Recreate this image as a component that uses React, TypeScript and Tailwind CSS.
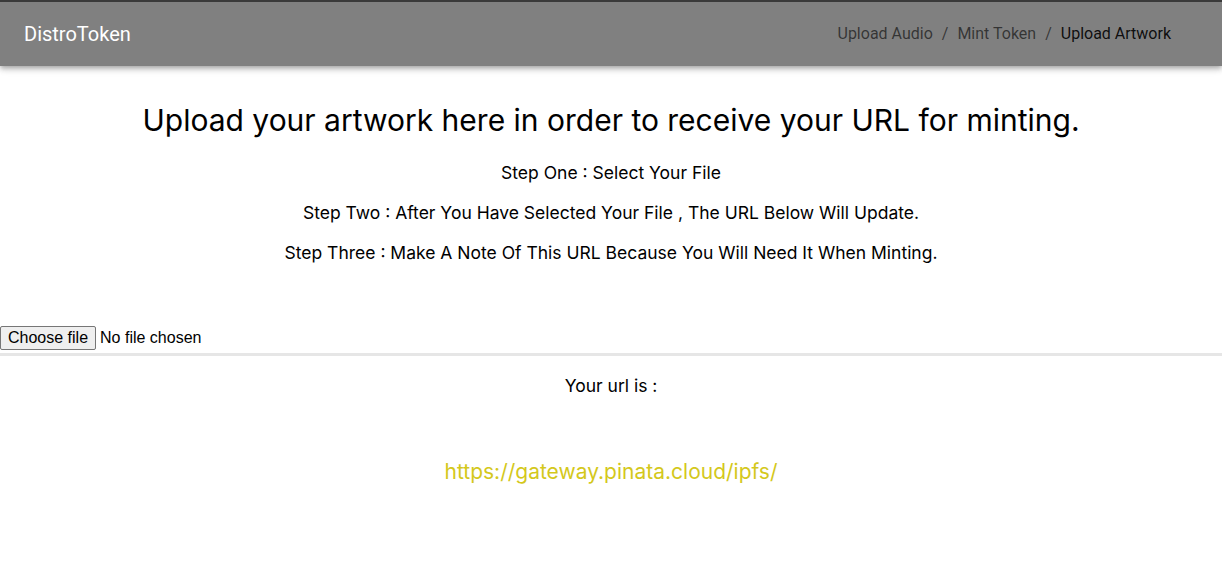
export default function App() {
  return (
    <div className="min-h-[585px] bg-white">
      <header className="flex h-[66px] items-center justify-between border-t-2 border-[#3a3a3a] bg-[#808080] pl-6 pr-[51px] shadow-[0_2px_4px_-1px_rgba(0,0,0,0.2),0_4px_5px_0_rgba(0,0,0,0.14),0_1px_10px_0_rgba(0,0,0,0.12)] font-['Roboto',sans-serif]">
        <div className="text-[20px] text-white">DistroToken</div>
        <nav className="flex items-center text-[16px] text-black/60">
          <span>Upload Audio</span>
          <span className="mx-[9px]">/</span>
          <span>Mint Token</span>
          <span className="mx-[9px]">/</span>
          <span className="text-black/90">Upload Artwork</span>
        </nav>
      </header>

      <main className="font-['Inter',sans-serif] text-black">
        <div className="flex flex-col items-center">
          <h1 className="mt-[36px] text-[30px] leading-[36px]">
            Upload your artwork here in order to receive your URL for minting.
          </h1>
          <p className="mt-[23px] text-[17.5px] leading-[24px]">Step One : Select Your File</p>
          <p className="mt-[16px] text-[17.5px] leading-[24px]">
            Step Two : After You Have Selected Your File , The URL Below Will Update.
          </p>
          <p className="mt-[16px] text-[17.5px] leading-[24px]">
            Step Three : Make A Note Of This URL Because You Will Need It When Minting.
          </p>
        </div>

        <label className="mt-[61px] flex h-[24px] items-center font-['Liberation_Sans',Arial,sans-serif] text-[16px]">
          <span className="flex h-[24px] items-center rounded-[2px] border border-[#767676] bg-[#efefef] px-[7px]">Choose file</span>
          <span className="ml-[4px]">No file chosen</span>
          <input type="file" className="hidden" />
        </label>
        <hr className="mt-[3px] h-[3px] border-0 bg-[#e6e6e6]" />

        <div className="flex flex-col items-center">
          <p className="mt-[18px] text-[17.5px] leading-[24px]">Your url is :</p>
          <p className="mt-[60px] text-[21px] leading-[28px] text-[#d4c81c]">https://gateway.pinata.cloud/ipfs/</p>
        </div>
      </main>
    </div>
  );
}
